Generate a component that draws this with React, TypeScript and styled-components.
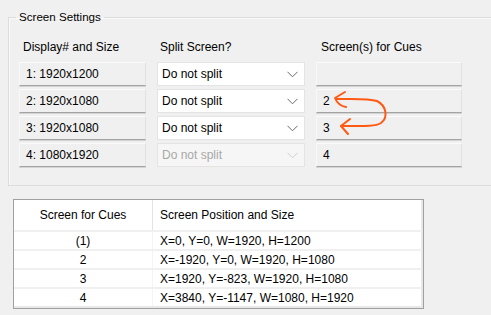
import React from "react";
import styled, { createGlobalStyle } from "styled-components";

const GlobalStyle = createGlobalStyle`
  html, body {
    margin: 0;
    padding: 0;
    background: #f0f0f0;
    overflow: hidden;
  }
  body {
    font-family: "Liberation Sans", Arial, sans-serif;
    font-size: 12px;
    color: #000;
  }
`;

const Page = styled.div`
  position: relative;
  width: 491px;
  height: 315px;
  padding-top: 10px;
  box-sizing: border-box;
`;

const Group = styled.fieldset`
  margin: 0 0 0 8px;
  padding: 16px 10px 17px 10px;
  border: 1px solid #dcdcdc;
  border-right: none;
  box-shadow: inset 1px 1px 0 #fafafa;
`;

const Legend = styled.legend`
  margin-left: -3px;
  padding: 0 3px;
  font-size: 11.6px;
  line-height: 14px;
`;

const Grid = styled.div`
  display: grid;
  grid-template-columns: 127px 148px 146px;
  column-gap: 11px;
  row-gap: 2px;
`;

const Heading = styled.div<{ $indent?: number }>`
  padding-left: ${(p) => p.$indent ?? 4}px;
  height: 20px;
  line-height: 14px;
`;

const Cell = styled.div`
  box-sizing: border-box;
  height: 24px;
  padding: 0 6px;
  display: flex;
  align-items: center;
  background: #f0f0f0;
  border: 1px solid #e2e2e2;
  border-top-color: #fbfbfb;
  border-left-color: #f8f8f8;
  border-bottom: 1px solid #a3a3a3;
  box-shadow: 0 1px 0 #d4d4d4;
  margin-bottom: 1px;
`;

const Select = styled.div<{ $disabled?: boolean }>`
  box-sizing: border-box;
  height: 24px;
  padding: 0 6px 0 4px;
  display: flex;
  align-items: center;
  justify-content: space-between;
  background: ${(p) => (p.$disabled ? "#f6f6f6" : "#fff")};
  color: ${(p) => (p.$disabled ? "#a8a8a8" : "#000")};
  border: 1px solid #e4e4e4;
`;

const Chevron = ({ disabled }: { disabled?: boolean }) => (
  <svg width="11" height="7" viewBox="0 0 11 7">
    <polyline
      points="0.5,0.8 5.5,5.8 10.5,0.8"
      fill="none"
      stroke={disabled ? "#cfcfcf" : "#6a6a6a"}
      strokeWidth="1"
    />
  </svg>
);

const TableWrap = styled.div`
  margin: 13px 0 0 13px;
  width: 411px;
  box-sizing: border-box;
  border: 1px solid #a0a0a0;
  box-shadow: inset -2px -2px 0 #e8e8e8;
  background: #fff;
  padding-bottom: 2px;
`;

const Table = styled.table`
  width: 408px;
  border-collapse: collapse;
  font-size: 12px;
`;

const Th = styled.th<{ $left?: boolean }>`
  height: 30px;
  font-weight: normal;
  text-align: ${(p) => (p.$left ? "left" : "center")};
  padding: 0 0 0 ${(p) => (p.$left ? "7px" : "0")};
  border-left: ${(p) => (p.$left ? "1px solid #e3e3e3" : "none")};
  vertical-align: middle;
`;

const Td = styled.td<{ $left?: boolean }>`
  height: 17px;
  padding: 0 0 0 ${(p) => (p.$left ? "7px" : "0")};
  text-align: ${(p) => (p.$left ? "left" : "center")};
  border-top: 2px solid #f0f0f0;
  border-left: ${(p) => (p.$left ? "1px solid #f4f4f4" : "none")};
  &:first-child {
    width: 138px;
  }
`;

const Arrows = styled.svg`
  position: absolute;
  left: 0;
  top: 0;
  pointer-events: none;
`;

const displays = [
  { size: "1: 1920x1200", cue: "" },
  { size: "2: 1920x1080", cue: "2" },
  { size: "3: 1920x1080", cue: "3" },
  { size: "4: 1080x1920", cue: "4", disabled: true },
];

const positions = [
  { screen: "(1)", pos: "X=0, Y=0, W=1920, H=1200" },
  { screen: "2", pos: "X=-1920, Y=0, W=1920, H=1080" },
  { screen: "3", pos: "X=1920, Y=-823, W=1920, H=1080" },
  { screen: "4", pos: "X=3840, Y=-1147, W=1080, H=1920" },
];

const App = () => {
  return (
    <>
      <GlobalStyle />
      <Page>
        <Group>
          <Legend>Screen Settings</Legend>
          <Grid>
            <Heading>Display# and Size</Heading>
            <Heading $indent={3}>Split Screen?</Heading>
            <Heading $indent={5}>Screen(s) for Cues</Heading>
            {displays.map((d) => (
              <React.Fragment key={d.size}>
                <Cell>{d.size}</Cell>
                <Select $disabled={d.disabled}>
                  Do not split
                  <Chevron disabled={d.disabled} />
                </Select>
                <Cell>{d.cue}</Cell>
              </React.Fragment>
            ))}
          </Grid>
        </Group>
        <TableWrap>
          <Table>
            <thead>
              <tr>
                <Th>Screen for Cues</Th>
                <Th $left>Screen Position and Size</Th>
              </tr>
            </thead>
            <tbody>
              {positions.map((p) => (
                <tr key={p.screen}>
                  <Td>{p.screen}</Td>
                  <Td $left>{p.pos}</Td>
                </tr>
              ))}
            </tbody>
          </Table>
        </TableWrap>
        <Arrows width="491" height="315" viewBox="0 0 491 315">
          <g
            fill="none"
            stroke="#ff5a14"
            strokeWidth="2"
            strokeLinecap="round"
            strokeLinejoin="round"
          >
            <path d="M345 92 L335 98 C337 103 340 106 346 107" />
            <path d="M336 99 C352 99 368 98 377 101 C387 106 388 118 381 123 C375 127 360 126 341 126" />
            <path d="M350 119 L341 126 L348 134" />
          </g>
        </Arrows>
      </Page>
    </>
  );
};

export default App;
